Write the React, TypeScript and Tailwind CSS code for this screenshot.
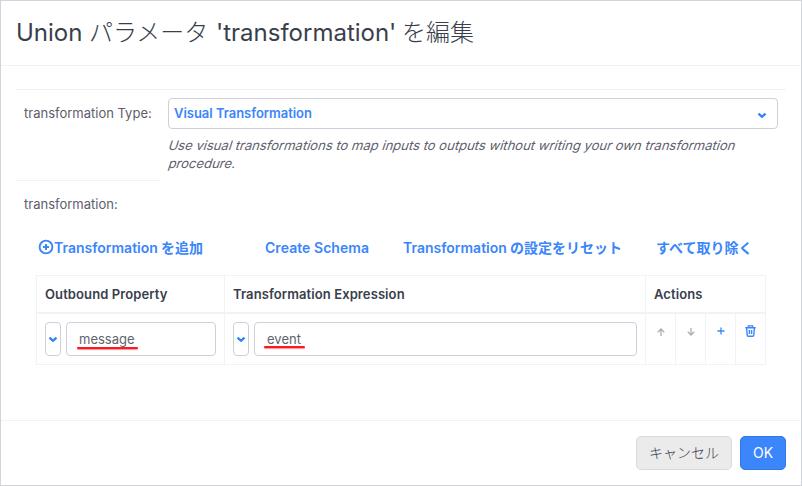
import React from "react";

const jp = "font-['Noto_Sans_CJK_JP',sans-serif]";

function Chevron({ className }: { className?: string }) {
  return (
    <svg viewBox="0 0 10 7" width="10" height="7" fill="none" stroke="#2f80fa" strokeWidth="2.3" className={className}>
      <path d="M1.5 1.7 5 4.8 8.5 1.7" />
    </svg>
  );
}

function PlusCircle() {
  return (
    <svg viewBox="0 0 16 16" width="16" height="16" fill="none" stroke="#3a86fa" strokeWidth="1.9" className="shrink-0">
      <circle cx="8" cy="8" r="6.4" />
      <path d="M8 5v6M5 8h6" strokeWidth="2" />
    </svg>
  );
}

function Arrow({ down }: { down?: boolean }) {
  return (
    <svg viewBox="0 0 8 8" width="8" height="8" fill="none" stroke="#a9adb4" strokeWidth="1.3" className={down ? "rotate-180" : ""}>
      <path d="M4 8V1M.8 4.2 4 1l3.2 3.2" />
    </svg>
  );
}

function Trash() {
  return (
    <svg viewBox="0 0 11 12" width="11" height="12" fill="none" stroke="#3a86fa" strokeWidth="1.4">
      <path d="M.3 2.8h10.4M3.4 2.4V.9h4.2v1.5M1.6 3l.6 7.3q.1 1 1 1h4.6q.9 0 1-1L9.4 3M4.4 5v4M6.6 5v4" />
    </svg>
  );
}

function Field({ value, className, mark }: { value: string; className: string; mark: string }) {
  return (
    <div className={`flex h-[34px] items-center rounded-[4px] border border-[#cfcfdb] pl-3 text-[13px] leading-[20px] text-[#60646d] ${className}`}>
      <span className="relative">
        {value}
        <span className={`absolute h-[2px] rounded-full bg-[#fa1a20] shadow-[0_1px_1px_#f2161c77] ${mark}`} />
      </span>
    </div>
  );
}

function Picker() {
  return (
    <div className="flex h-[34px] w-4 shrink-0 items-center justify-center rounded-[4px] border border-[#cfcfdb]">
      <Chevron />
    </div>
  );
}

export default function App() {
  return (
    <div className="flex h-[486px] w-[802px] flex-col border border-[#ced5df] bg-white font-[Inter,'Noto_Sans_CJK_JP',sans-serif] text-[13px] text-[#5c606b]">
      <header className="flex h-[65px] shrink-0 items-center border-b border-[#f1f2f5] pl-[15px] text-[24px] whitespace-pre text-[#393e4b]">
        <span className="w-[73px]">Union</span>
        <span className={`w-[127px] pb-[4px] font-light ${jp}`}>パラメータ</span>
        <span className="w-[186px]">'transformation'</span>
        <span className={`pb-[4px] font-light ${jp}`}>を編集</span>
      </header>

      <main className="h-[354px] shrink-0 px-[15px] pt-[23px]">
        <section className="flex h-[92px] border-t border-[#f1f2f5]">
          <div className="w-36 shrink-0 border-b border-[#f1f2f5] pt-[13px] pl-2 leading-[20px] whitespace-nowrap">transformation Type:</div>
          <div className="ml-2 w-[610px] pt-2">
            <div className="flex h-[31px] items-center justify-between rounded-[4px] border border-[#cfcfdb] pr-[10px] pl-[5px] font-semibold text-[#3a86fa]">
              <span className="tracking-[-0.03px]">Visual Transformation</span>
              <Chevron className="mt-[3px]" />
            </div>
            <p className="mt-[7px] pl-px leading-[18px] tracking-[0.02px] whitespace-nowrap">
              <span className="inline-block -skew-x-[18deg]">
                Use visual transformations to map inputs to outputs without writing your own transformation
              </span>
              <br />
              <span className="inline-block -skew-x-[18deg]">procedure.</span>
            </p>
          </div>
        </section>

        <div className="mt-[13px] pl-2 leading-[20px]">transformation:</div>

        <nav className="mt-[22px] flex h-[22px] items-center pl-[22px] text-[14px] font-semibold whitespace-pre text-[#3a86fa]">
          <div className="flex w-[227px] items-center">
            <PlusCircle />
            <span className="w-[107px]">Transformation</span>
            <span className={`font-bold ${jp}`}>を追加</span>
          </div>
          <div className="w-[138px] tracking-[0.05px]">Create Schema</div>
          <div className="flex w-[253px] items-center">
            <span className="w-[107px]">Transformation</span>
            <span className={`font-bold ${jp}`}>の設定をリセット</span>
          </div>
          <div className={`font-bold ${jp}`}>すべて取り除く</div>
        </nav>

        <table className="mt-[17px] ml-5 w-[730px] table-fixed border-separate border-spacing-0 border-t border-l border-[#f1f2f5]">
          <colgroup>
            <col className="w-[188px]" />
            <col className="w-[421px]" />
            <col className="w-[30px]" />
            <col className="w-[30px]" />
            <col className="w-[30px]" />
            <col className="w-[30px]" />
          </colgroup>
          <thead>
            <tr className="h-[38px] text-left tracking-[0.1px] text-[#393e4b]">
              <th className="border-r border-b-2 border-[#f1f2f5] px-2 pt-[2px] font-semibold">Outbound Property</th>
              <th className="border-r border-b-2 border-[#f1f2f5] px-2 pt-[2px] font-semibold">Transformation Expression</th>
              <th colSpan={4} className="border-r border-b-2 border-[#f1f2f5] px-2 pt-[2px] font-semibold">Actions</th>
            </tr>
          </thead>
          <tbody>
            <tr className="h-[51px]">
              <td className="border-r border-b border-[#f1f2f5] px-2">
                <div className="flex gap-[5px]">
                  <Picker />
                  <Field value="message" className="w-[150px]" mark="-left-[2px] top-[18px] w-[61px]" />
                </div>
              </td>
              <td className="border-r border-b border-[#f1f2f5] px-2">
                <div className="flex gap-[5px]">
                  <Picker />
                  <Field value="event" className="w-[383px]" mark="-left-[3px] top-[17px] w-[41px]" />
                </div>
              </td>
              <td className="border-r border-b border-[#f1f2f5] pt-[14px] align-top">
                <div className="flex justify-center"><Arrow /></div>
              </td>
              <td className="border-r border-b border-[#f1f2f5] pt-[14px] align-top">
                <div className="flex justify-center"><Arrow down /></div>
              </td>
              <td className="border-r border-b border-[#f1f2f5] pt-[13px] align-top">
                <div className="flex justify-center">
                  <svg viewBox="0 0 8 8" width="8" height="8" stroke="#3a86fa" strokeWidth="1.3"><path d="M4 .5v7M.5 4h7" /></svg>
                </div>
              </td>
              <td className="border-r border-b border-[#f1f2f5] pt-[11px] align-top">
                <div className="flex justify-center"><Trash /></div>
              </td>
            </tr>
          </tbody>
        </table>
      </main>

      <footer className="flex flex-1 justify-end gap-2 border-t border-[#f1f2f5] pt-[15px] pr-[15px]">
        <button className={`h-[34px] w-24 rounded-[5px] border border-[#dadada] bg-[#ebebeb] pb-px text-[14px] font-light text-[#393e4b] ${jp}`}>キャンセル</button>
        <button className="h-[34px] w-[46px] rounded-[5px] border border-[#2f78e8] bg-[#3a86fa] pb-px text-[14px] text-white">OK</button>
      </footer>
    </div>
  );
}
